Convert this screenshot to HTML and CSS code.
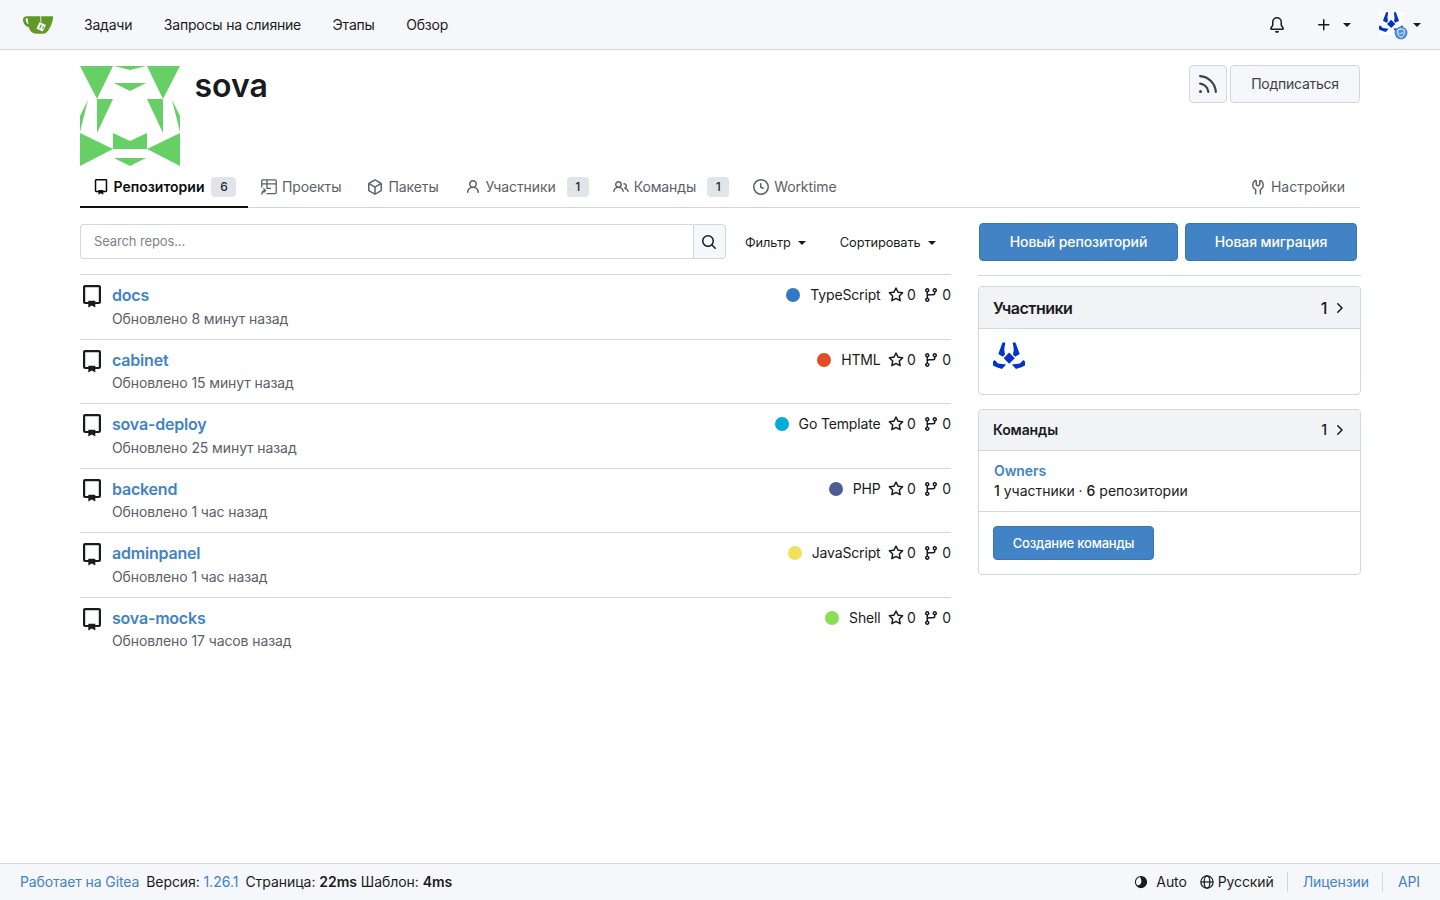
FILE: index.html
```html
<!DOCTYPE html>
<html lang="ru">
<head>
<meta charset="utf-8">
<title>sova</title>
<link rel="stylesheet" href="styles.css">
</head>
<body>
<svg class="sprite" aria-hidden="true">
  <symbol id="i-repo" viewBox="0 0 18 23"><path d="M12.500 18H15.900a1 1 0 0 0 1-1V2a.9.9 0 0 0-.9-.9H2a.9.9 0 0 0-.9.9V17a1 1 0 0 0 1 1H5.500" fill="none" stroke="currentColor" stroke-width="2.200" stroke-linecap="round"/><path d="M5.300 15.800h7v6.700l-3.500-2-3.500 2z" fill="currentColor"/></symbol>
  <symbol id="i-star" viewBox="0 0 16 16"><path d="M8 .25a.75.75 0 0 1 .673.418l1.882 3.815 4.21.612a.75.75 0 0 1 .416 1.279l-3.046 2.97.719 4.192a.751.751 0 0 1-1.088.791L8 12.347l-3.766 1.98a.75.75 0 0 1-1.088-.79l.72-4.194L.818 6.374a.75.75 0 0 1 .416-1.28l4.21-.611L7.327.668A.75.75 0 0 1 8 .25Zm0 2.445L6.615 5.5a.75.75 0 0 1-.564.41l-3.097.45 2.24 2.184a.75.75 0 0 1 .216.664l-.528 3.084 2.769-1.456a.75.75 0 0 1 .698 0l2.77 1.456-.53-3.084a.75.75 0 0 1 .216-.664l2.24-2.183-3.096-.45a.75.75 0 0 1-.564-.41L8 2.694Z"/></symbol>
  <symbol id="i-branch" viewBox="0 0 16 16"><path d="M9.5 3.25a2.25 2.25 0 1 1 3 2.122V6A2.5 2.5 0 0 1 10 8.5H6a1 1 0 0 0-1 1v1.128a2.251 2.251 0 1 1-1.5 0V5.372a2.25 2.25 0 1 1 1.5 0v1.836A2.493 2.493 0 0 1 6 7h4a1 1 0 0 0 1-1v-.628A2.25 2.25 0 0 1 9.5 3.25Zm-6 0a.75.75 0 1 0 1.5 0 .75.75 0 0 0-1.5 0Zm8.25-.75a.75.75 0 1 0 0 1.5.75.75 0 0 0 0-1.5ZM4.25 12a.75.75 0 1 0 0 1.5.75.75 0 0 0 0-1.5Z"/></symbol>
  <symbol id="i-bell" viewBox="0 0 16 16"><path d="M8 16a2 2 0 0 0 1.985-1.75c.017-.137-.097-.25-.235-.25h-3.5c-.138 0-.252.113-.235.25A2 2 0 0 0 8 16ZM3 5a5 5 0 0 1 10 0v2.947c0 .05.015.098.042.139l1.703 2.555A1.519 1.519 0 0 1 13.482 13H2.518a1.516 1.516 0 0 1-1.263-2.36l1.703-2.554A.255.255 0 0 0 3 7.947Zm5-3.5A3.5 3.5 0 0 0 4.5 5v2.947c0 .346-.102.683-.294.97l-1.703 2.556a.017.017 0 0 0-.003.01l.001.006c0 .002.002.004.004.006l.006.004.007.001h10.964l.007-.001.006-.004.004-.006.001-.007a.017.017 0 0 0-.003-.01l-1.703-2.554a1.745 1.745 0 0 1-.294-.97V5A3.5 3.5 0 0 0 8 1.5Z"/></symbol>
  <symbol id="i-plus" viewBox="0 0 16 16"><path d="M7.75 2a.75.75 0 0 1 .75.75V7h4.25a.75.75 0 0 1 0 1.5H8.5v4.25a.75.75 0 0 1-1.5 0V8.5H2.75a.75.75 0 0 1 0-1.5H7V2.75A.75.75 0 0 1 7.75 2Z"/></symbol>
  <symbol id="i-rss" viewBox="0 0 16 16"><path d="M2.002 2.725a.75.75 0 0 1 .797-.699C8.79 2.42 13.58 7.21 13.974 13.201a.75.75 0 0 1-1.497.098 10.502 10.502 0 0 0-9.776-9.776.747.747 0 0 1-.7-.798ZM2.84 7.05h-.002a7.002 7.002 0 0 1 6.113 6.111.75.75 0 0 1-1.49.178 5.503 5.503 0 0 0-4.8-4.8.75.75 0 0 1 .179-1.489ZM2 13a1 1 0 1 1 2 0 1 1 0 0 1-2 0Z"/></symbol>
  <symbol id="i-project" viewBox="0 0 16 16"><path d="M6 14.700H14a1.300 1.300 0 0 0 1.200-1.200V1.800A1.100 1.100 0 0 0 14 .8H2A1.100 1.100 0 0 0 .8 1.800V8M1 4.800h14M6 .8v8.600H9.500" fill="none" stroke="currentColor" stroke-width="1.300" stroke-linecap="round"/><path d="M.8 15.200c0-2.200 1.200-3.600 3.600-3.600M2.800 9.800l1.900 1.800-1.900 1.800" fill="none" stroke="currentColor" stroke-width="1.300" stroke-linecap="round" stroke-linejoin="round"/></symbol>
  <symbol id="i-package" viewBox="0 0 16 16"><path d="m8.878.392 5.25 3.045c.54.314.872.89.872 1.514v6.098a1.75 1.75 0 0 1-.872 1.514l-5.25 3.045a1.75 1.75 0 0 1-1.756 0l-5.25-3.045A1.75 1.75 0 0 1 1 11.049V4.951c0-.624.332-1.201.872-1.514L7.122.392a1.75 1.75 0 0 1 1.756 0ZM7.875 1.69l-4.63 2.685L8 7.133l4.755-2.758-4.63-2.685a.248.248 0 0 0-.25 0ZM2.5 5.677v5.372c0 .09.047.171.125.216l4.625 2.683V8.432Zm6.25 8.271 4.625-2.683a.25.25 0 0 0 .125-.216V5.677L8.75 8.432Z"/></symbol>
  <symbol id="i-person" viewBox="0 0 16 16"><path d="M10.561 8.073a6.005 6.005 0 0 1 3.432 5.142.75.75 0 1 1-1.498.07 4.5 4.5 0 0 0-8.99 0 .75.75 0 1 1-1.498-.07 6.004 6.004 0 0 1 3.431-5.142 3.999 3.999 0 1 1 5.123 0ZM10.5 5a2.5 2.5 0 1 0-5 0 2.5 2.5 0 0 0 5 0Z"/></symbol>
  <symbol id="i-people" viewBox="0 0 16 16"><path d="M2 5.5a3.5 3.5 0 1 1 5.898 2.549 5.508 5.508 0 0 1 3.034 4.084.75.75 0 1 1-1.482.235 4 4 0 0 0-7.9 0 .75.75 0 0 1-1.482-.236A5.507 5.507 0 0 1 3.102 8.05 3.493 3.493 0 0 1 2 5.5ZM11 4a3.001 3.001 0 0 1 2.22 5.018 5.01 5.01 0 0 1 2.56 3.012.749.749 0 0 1-.885.954.752.752 0 0 1-.549-.514 3.507 3.507 0 0 0-2.522-2.372.75.75 0 0 1-.574-.73v-.352a.75.75 0 0 1 .416-.672A1.5 1.5 0 0 0 11 5.5.75.75 0 0 1 11 4Zm-5.5-.5a2 2 0 1 0-.001 3.999A2 2 0 0 0 5.5 3.5Z"/></symbol>
  <symbol id="i-clock" viewBox="0 0 16 16"><path d="M8 0a8 8 0 1 1 0 16A8 8 0 0 1 8 0ZM1.5 8a6.5 6.5 0 1 0 13 0 6.5 6.5 0 0 0-13 0Zm7-3.25v2.992l2.028.812a.75.75 0 0 1-.557 1.392l-2.5-1A.751.751 0 0 1 7 8.25v-3.5a.75.75 0 0 1 1.5 0Z"/></symbol>
  <symbol id="i-tools" viewBox="0 0 16 16"><path d="M5.433 2.304A4.492 4.492 0 0 0 3.5 6c0 1.598.832 3.002 2.09 3.802.518.328.929.923.902 1.64v.008l-.164 3.337a.75.75 0 1 1-1.498-.073l.163-3.33c.002-.085-.05-.216-.207-.316A5.996 5.996 0 0 1 2 6a5.993 5.993 0 0 1 2.567-4.92 1.482 1.482 0 0 1 1.673-.04c.462.296.76.827.76 1.423v2.82c0 .082.041.16.11.206l.75.51a.25.25 0 0 0 .28 0l.75-.51A.249.249 0 0 0 9 5.282V2.463c0-.596.298-1.127.76-1.423a1.482 1.482 0 0 1 1.673.04A5.993 5.993 0 0 1 14 6a5.996 5.996 0 0 1-2.786 5.068c-.157.1-.209.23-.207.315l.163 3.33a.752.752 0 0 1-1.094.714.75.75 0 0 1-.404-.64l-.164-3.345c-.027-.717.384-1.312.902-1.64A4.495 4.495 0 0 0 12.5 6a4.492 4.492 0 0 0-1.933-3.696c-.024.017-.067.067-.067.16v2.818a1.75 1.75 0 0 1-.767 1.448l-.75.51a1.75 1.75 0 0 1-1.966 0l-.75-.51A1.75 1.75 0 0 1 5.5 5.282V2.463c0-.092-.043-.142-.067-.159Z"/></symbol>
  <symbol id="i-search" viewBox="0 0 16 16"><path d="M10.68 11.74a6 6 0 0 1-7.922-8.982 6 6 0 0 1 8.982 7.922l3.04 3.04a.749.749 0 0 1-.326 1.275.749.749 0 0 1-.734-.215ZM11.5 7a4.499 4.499 0 1 0-8.997 0A4.499 4.499 0 0 0 11.5 7Z"/></symbol>
  <symbol id="i-chevron" viewBox="0 0 16 16"><path d="M6.22 3.22a.75.75 0 0 1 1.06 0l4.25 4.25a.75.75 0 0 1 0 1.06l-4.25 4.25a.751.751 0 0 1-1.042-.018.751.751 0 0 1-.018-1.042L9.94 8 6.22 4.28a.75.75 0 0 1 0-1.06Z"/></symbol>
  <symbol id="i-caret" viewBox="0 0 8 4"><path d="M0 0h8L4 4z"/></symbol>
  <symbol id="i-globe" viewBox="0 0 16 16"><g fill="none" stroke="currentColor" stroke-width="1.400"><circle cx="8" cy="8" r="7"/><ellipse cx="8" cy="8" rx="3.200" ry="7"/><path d="M1 8h14"/></g></symbol>
  <symbol id="i-theme" viewBox="0 0 16 16"><circle cx="8" cy="8" r="6.400" fill="none" stroke="currentColor" stroke-width="1.200"/><path d="M6.500 1.800A6.400 6.400 0 1 1 2.800 12c3.200.2 6-1.400 5.600-5.200C8.200 5 7.600 3.200 6.500 1.800Z"/></symbol>
  <symbol id="i-user" viewBox="0 0 32 32"><path fill="#fff" d="M0 0h32v32H0z"/><g fill="#0433cc"><path d="M9.500 1.500h2.800L11.200 8.500l.8 5-2.200 2.300-4.500-2.800z"/><path d="M22.500 1.500h-2.800l1.100 7-.8 5 2.200 2.300 4.500-2.800z"/><path d="M16.200 11.600l5.600 5.600-5.600 5.600-5.600-5.600z"/><path d="M0 20.500l1.600-1.500 3.500 3.500 7.900 1-.9 1.200-3.100 3.300-6-2.100-3-1.300z"/><path d="M32 20.500l-1.600-1.500-3.500 3.500-7.900 1 .9 1.200 3.100 3.300 6-2.100 3-1.300z"/></g></symbol>
</svg>

<header class="navbar">
  <nav class="nav-left">
    <svg class="logo" viewBox="0 0 30 20" aria-label="Gitea">
      <path d="M0 4.500C0 2 2 1.200 4 1.200h26c.4 4-1.800 10-5 14.500-1.400 2-3 3-5 3h-6.500C9 18.700 7 16 5.800 12.300 2.500 11.400 0 8.500 0 4.500Z" fill="#609926"/>
      <path d="M2.600 4.300c0-.7.700-1.100 1.300-1.100l.8 0c.1 2 .3 4 .8 6C3.800 8.500 2.600 6.500 2.600 4.300Z" fill="#fff"/>
      <path d="M16.700 7l6.200 3.100-3.200 6.400-6.300-3.100z" fill="#fff"/>
      <path d="M17.800 9.500l1.100.5-1.700 3.600-1.100-.5zM20.200 10.900l1 .5-1.200 2.700-1-.5z" fill="#609926"/>
      <path d="M17 1.200l1.200 0 .3 5.800-1.100 0z" fill="#fff" opacity=".7"/>
    </svg>
    <a class="nav-link" href="#">Задачи</a>
    <a class="nav-link" href="#">Запросы на слияние</a>
    <a class="nav-link" href="#">Этапы</a>
    <a class="nav-link" href="#">Обзор</a>
  </nav>
  <div class="nav-right">
    <svg class="ic16 nav-bell"><use href="#i-bell"/></svg>
    <span class="nav-plus"><svg class="ic16"><use href="#i-plus"/></svg><svg class="caret"><use href="#i-caret"/></svg></span>
    <span class="nav-user">
      <span class="nav-avatar">
        <svg class="avatar-sm"><use href="#i-user"/></svg>
        <svg class="shield" viewBox="0 0 14 14"><circle cx="7" cy="7" r="6.500" fill="#4a90d9"/><path d="M7 2.800l3.300 1.200v2.700c0 2.100-1.400 3.700-3.300 4.500-1.900-.8-3.300-2.400-3.300-4.500V4z" fill="none" stroke="#fff" stroke-width="1"/><path d="M5.400 6.800l1.200 1.200 2-2" fill="none" stroke="#fff" stroke-width="1"/></svg>
      </span>
      <svg class="caret"><use href="#i-caret"/></svg>
    </span>
  </div>
</header>

<main class="page">
  <section class="org-head">
    <svg class="org-avatar" viewBox="0 0 100 100" aria-label="sova">
      <g fill="#66cf66">
        <path d="M0 0h33L17 33zM34 0h32L50 4zM67 0h33L83 33zM34 17h32L50 25zM17 33h16L17 67zM67 33h16v34zM8 34 0 50v16zM92 34l8 16v16z"/>
        <path d="M0 67l33 16L0 100zM100 67 67 83l33 17zM33 67l17 8 17-8v16H33zM34 92h32l-16 8z"/>
      </g>
    </svg>
    <h1 class="org-name">sova</h1>
    <div class="org-actions">
      <a class="btn-plain btn-rss" href="#"><svg class="ic24"><use href="#i-rss"/></svg></a>
      <a class="btn-plain btn-sub" href="#">Подписаться</a>
    </div>
  </section>

  <nav class="tabs">
    <a class="tab tab-active" href="#"><svg class="ic16"><use href="#i-repo"/></svg>Репозитории<span class="count count-wide">6</span></a>
    <a class="tab" href="#"><svg class="ic16"><use href="#i-project"/></svg>Проекты</a>
    <a class="tab" href="#"><svg class="ic16"><use href="#i-package"/></svg>Пакеты</a>
    <a class="tab tab-counted" href="#"><svg class="ic16"><use href="#i-person"/></svg>Участники<span class="count">1</span></a>
    <a class="tab tab-counted" href="#"><svg class="ic16"><use href="#i-people"/></svg>Команды<span class="count">1</span></a>
    <a class="tab" href="#"><svg class="ic16"><use href="#i-clock"/></svg>Worktime</a>
    <a class="tab tab-end" href="#"><svg class="ic16"><use href="#i-tools"/></svg>Настройки</a>
  </nav>

  <div class="columns">
    <section class="col-main">
      <div class="search-row">
        <div class="search-box">
          <input class="search-input" type="text" placeholder="Search repos...">
          <button class="search-btn" type="button"><svg class="ic16"><use href="#i-search"/></svg></button>
        </div>
        <span class="dropdown dd-filter">Фильтр<svg class="caret"><use href="#i-caret"/></svg></span>
        <span class="dropdown dd-sort">Сортировать<svg class="caret"><use href="#i-caret"/></svg></span>
      </div>
      <ul class="repos">
        <li class="repo">
          <svg class="repo-icon"><use href="#i-repo"/></svg>
          <div class="repo-body">
            <div class="repo-top"><a class="repo-name" href="#">docs</a>
              <div class="repo-meta"><i class="dot dot-ts"></i><span class="lang">TypeScript</span><svg class="ic16"><use href="#i-star"/></svg><span class="num">0</span><svg class="ic16 fork"><use href="#i-branch"/></svg><span class="num">0</span></div></div>
            <div class="repo-time">Обновлено 8 минут назад</div>
          </div>
        </li>
        <li class="repo">
          <svg class="repo-icon"><use href="#i-repo"/></svg>
          <div class="repo-body">
            <div class="repo-top"><a class="repo-name" href="#">cabinet</a>
              <div class="repo-meta"><i class="dot dot-html"></i><span class="lang">HTML</span><svg class="ic16"><use href="#i-star"/></svg><span class="num">0</span><svg class="ic16 fork"><use href="#i-branch"/></svg><span class="num">0</span></div></div>
            <div class="repo-time">Обновлено 15 минут назад</div>
          </div>
        </li>
        <li class="repo">
          <svg class="repo-icon"><use href="#i-repo"/></svg>
          <div class="repo-body">
            <div class="repo-top"><a class="repo-name" href="#">sova-deploy</a>
              <div class="repo-meta"><i class="dot dot-go"></i><span class="lang">Go Template</span><svg class="ic16"><use href="#i-star"/></svg><span class="num">0</span><svg class="ic16 fork"><use href="#i-branch"/></svg><span class="num">0</span></div></div>
            <div class="repo-time">Обновлено 25 минут назад</div>
          </div>
        </li>
        <li class="repo">
          <svg class="repo-icon"><use href="#i-repo"/></svg>
          <div class="repo-body">
            <div class="repo-top"><a class="repo-name" href="#">backend</a>
              <div class="repo-meta"><i class="dot dot-php"></i><span class="lang">PHP</span><svg class="ic16"><use href="#i-star"/></svg><span class="num">0</span><svg class="ic16 fork"><use href="#i-branch"/></svg><span class="num">0</span></div></div>
            <div class="repo-time">Обновлено 1 час назад</div>
          </div>
        </li>
        <li class="repo">
          <svg class="repo-icon"><use href="#i-repo"/></svg>
          <div class="repo-body">
            <div class="repo-top"><a class="repo-name" href="#">adminpanel</a>
              <div class="repo-meta"><i class="dot dot-js"></i><span class="lang">JavaScript</span><svg class="ic16"><use href="#i-star"/></svg><span class="num">0</span><svg class="ic16 fork"><use href="#i-branch"/></svg><span class="num">0</span></div></div>
            <div class="repo-time">Обновлено 1 час назад</div>
          </div>
        </li>
        <li class="repo">
          <svg class="repo-icon"><use href="#i-repo"/></svg>
          <div class="repo-body">
            <div class="repo-top"><a class="repo-name" href="#">sova-mocks</a>
              <div class="repo-meta"><i class="dot dot-sh"></i><span class="lang">Shell</span><svg class="ic16"><use href="#i-star"/></svg><span class="num">0</span><svg class="ic16 fork"><use href="#i-branch"/></svg><span class="num">0</span></div></div>
            <div class="repo-time">Обновлено 17 часов назад</div>
          </div>
        </li>
      </ul>
    </section>

    <aside class="col-side">
      <div class="side-actions">
        <a class="btn-primary btn-new-repo" href="#">Новый репозиторий</a>
        <a class="btn-primary btn-new-mig" href="#">Новая миграция</a>
      </div>
      <hr class="side-rule">
      <div class="card">
        <div class="card-head card-head-lg"><span>Участники</span><span class="card-count">1<svg class="ic16"><use href="#i-chevron"/></svg></span></div>
        <div class="card-members"><svg class="avatar-md"><use href="#i-user"/></svg></div>
      </div>
      <div class="card card-teams">
        <div class="card-head"><span>Команды</span><span class="card-count">1<svg class="ic16"><use href="#i-chevron"/></svg></span></div>
        <div class="team">
          <a class="team-name" href="#">Owners</a>
          <div class="team-info"><b class="team-b">1</b> участники · <b class="team-b">6</b> репозитории</div>
        </div>
        <div class="card-foot"><a class="btn-primary btn-team" href="#">Создание команды</a></div>
      </div>
    </aside>
  </div>
</main>

<footer class="footer">
  <div class="foot-left">
    <a class="link" href="#">Работает на Gitea</a>
    <span>Версия: <a class="link foot-ver" href="#">1.26.1</a></span>
    <span class="foot-perf">Страница: <b class="foot-b">22ms</b> Шаблон: <b class="foot-b">4ms</b></span>
  </div>
  <div class="foot-right">
    <span class="foot-item foot-theme"><svg class="ic14"><use href="#i-theme"/></svg>Auto</span>
    <span class="foot-item foot-lang"><svg class="ic14"><use href="#i-globe"/></svg>Русский</span>
    <a class="link foot-sep" href="#">Лицензии</a>
    <a class="link foot-sep" href="#">API</a>
  </div>
</footer>
</body>
</html>
```

FILE: styles.css
```css
* { box-sizing: border-box; }
html, body { margin: 0; height: 100%; }
body {
  min-height: 100vh;
  display: flex;
  flex-direction: column;
  background: #fff;
  color: #181c21;
  font: 14px/20px Inter, "Noto Sans", "Liberation Sans", sans-serif;
  letter-spacing: -0.1px;
}
a { text-decoration: none; color: inherit; }
svg { fill: currentColor; flex: none; }
.sprite { display: none; }
.ic14 { width: 14px; height: 14px; }
.ic16 { width: 16px; height: 16px; }
.ic24 { width: 24px; height: 24px; }
.caret { width: 8px; height: 4px; }
.link { color: #4183c4; }

/* navbar */
.navbar {
  height: 50px;
  flex: none;
  display: flex;
  align-items: center;
  justify-content: space-between;
  padding: 0 19px 0 23px;
  background: #f6f7fa;
  border-bottom: 1px solid #d0d7de;
}
.nav-left { display: flex; align-items: center; }
.logo { width: 30px; height: 20px; margin-right: 31px; }
.nav-link { margin-right: 31.5px; color: #181c21; letter-spacing: -0.2px; }
.nav-right { display: flex; align-items: center; color: #181c21; }
.nav-bell { margin-right: 31px; }
.nav-plus { display: flex; align-items: center; gap: 11px; margin-right: 28px; }
.nav-user { display: flex; align-items: center; gap: 6px; }
.nav-avatar { position: relative; width: 28px; height: 28px; }
.avatar-sm { width: 24px; height: 24px; display: block; }
.shield { position: absolute; left: 15px; top: 15px; width: 14px; height: 14px; }

/* page */
.page {
  width: 1280px;
  margin: 0 auto;
  flex: 1 0 auto;
}
.org-head {
  display: flex;
  align-items: flex-start;
  padding-top: 16px;
  height: 120px;
}
.org-avatar { width: 100px; height: 100px; display: block; }
.org-name {
  margin: 0 0 0 14.5px;
  font-size: 32px;
  line-height: 40px;
  font-weight: 600;
  letter-spacing: 0;
}
.org-actions { margin-left: auto; display: flex; gap: 3px; margin-top: -1px; }
.btn-plain {
  height: 38px;
  display: flex;
  align-items: center;
  justify-content: center;
  background: #f6f7fa;
  border: 1px solid #d0d7de;
  border-radius: 4px;
  color: #3c4148;
  letter-spacing: -0.25px;
}
.btn-rss { width: 38px; }
.btn-sub { width: 130px; }

/* tabs */
.tabs {
  display: flex;
  height: 38px;
  border-bottom: 1px solid #d0d7de;
  color: #5b6167;
}
.tab {
  display: flex;
  align-items: center;
  gap: 5px;
  height: 38px;
  padding: 0 13.5px 4px 12.5px;
}
.tab-counted { padding-right: 11.5px; }
.tab-active {
  color: #0a0d10;
  font-weight: 600;
  letter-spacing: 0;
  border-bottom: 2px solid #111;
  padding: 0 12px 2px 12.5px;
}
.tab-end { margin-left: auto; padding-right: 15px; letter-spacing: 0; }
.count {
  min-width: 22px;
  height: 20px;
  margin-left: 6px;
  padding: 0 7px;
  display: flex;
  align-items: center;
  justify-content: center;
  background: #e1e4e8;
  color: #22272c;
  border-radius: 4px;
  font-size: 12px;
  font-weight: 500;
}
.count-wide { min-width: 25px; margin-left: 2px; }

/* columns */
.columns { display: flex; padding-top: 15px; }
.col-main { width: 871px; }
.col-side { width: 383px; margin-left: 27px; margin-right: -1px; }

.search-row { display: flex; align-items: flex-end; height: 36px; }
.search-box { width: 646px; height: 35px; display: flex; }
.search-input {
  flex: 1;
  min-width: 0;
  padding: 0 13px 1px;
  border: 1px solid #d0d7de;
  border-right: 0;
  border-radius: 4px 0 0 4px;
  font: 13px Inter, "Liberation Sans", sans-serif;
  letter-spacing: -0.12px;
  outline: none;
  color: #181c21;
}
.search-input::placeholder { color: #7d848c; }
.search-btn {
  width: 33px;
  padding: 0 1px 0 0;
  display: flex;
  align-items: center;
  justify-content: center;
  background: #f6f7fa;
  border: 1px solid #d0d7de;
  border-radius: 0 4px 4px 0;
  color: #181c21;
}
.dropdown { display: flex; align-items: center; height: 35px; padding-top: 2px; font-size: 12.8px; gap: 7px; }
.dd-filter { margin-left: 19px; }
.dd-sort { margin-left: 34px; }

.repos { list-style: none; margin: 15px 0 0; padding: 0; }
.repo {
  display: flex;
  height: 64.5px;
  border-top: 1px solid #d0d7de;
  padding-top: 10px;
}
.repo-icon { width: 18px; height: 23px; margin-left: 3px; color: #181c21; }
.repo-body { flex: 1; margin-left: 11px; min-width: 0; }
.repo-top { display: flex; justify-content: space-between; align-items: center; height: 20px; }
.repo-name { color: #4183c4; font-size: 16px; font-weight: 600; letter-spacing: -0.2px; }
.repo-meta { display: flex; align-items: center; }
.dot { width: 14px; height: 14px; border-radius: 50%; margin-right: 10px; }
.dot-ts { background: #3178c6; }
.dot-html { background: #e34c26; }
.dot-go { background: #00add8; }
.dot-php { background: #4f5d95; }
.dot-js { background: #f1e05a; }
.dot-sh { background: #89e051; }
.lang { margin-right: 7px; letter-spacing: -0.15px; }
.num { margin-left: 3.5px; }
.fork { margin-left: 7px; }
.repo-time { margin-top: 3.75px; color: #5b6167; }

/* side */
.side-actions { display: flex; gap: 7px; padding-left: 1px; }
.btn-primary {
  display: flex;
  align-items: center;
  justify-content: center;
  background: #4183c4;
  border: 1px solid #3a75b0;
  border-radius: 4px;
  color: #fff;
  font-weight: 500;
}
.btn-new-repo { width: 199px; height: 38px; }
.btn-new-mig { width: 172px; height: 38px; }
.side-rule { margin: 14px 0 10px; border: 0; border-top: 1px solid #d0d7de; }
.card { border: 1px solid #d0d7de; border-radius: 4px; overflow: hidden; }
.card-head {
  height: 41px;
  display: flex;
  align-items: center;
  justify-content: space-between;
  padding: 0 13px 0 14px;
  background: #f1f3f5;
  border-bottom: 1px solid #d0d7de;
  font-weight: 600;
}
.card-head-lg { height: 42px; font-size: 16px; letter-spacing: -0.5px; }
.card-count { display: flex; align-items: center; gap: 4px; font-weight: 500; }
.card-members { height: 65px; padding: 12px 14px; }
.avatar-md { width: 32px; height: 32px; display: block; }
.card-teams { margin-top: 14px; }
.team { height: 61px; padding: 10px 15px; border-bottom: 1px solid #d0d7de; }
.team-name { display: block; color: #4183c4; font-weight: 600; }
.team-info { letter-spacing: 0; }
.team-b { font-weight: 500; }
.card-foot { height: 62px; padding: 14px; }
.btn-team { width: 161px; height: 34px; font-size: 13px; letter-spacing: -0.2px; }

/* footer */
.footer {
  flex: none;
  height: 37px;
  display: flex;
  align-items: center;
  justify-content: space-between;
  padding: 0 20px;
  background: #f6f7fa;
  border-top: 1px solid #d0d7de;
}
.foot-left { display: flex; gap: 7px; }
.foot-ver { letter-spacing: 0; }
.foot-perf { letter-spacing: -0.04px; }
.foot-b { font-weight: 600; }
.foot-right { display: flex; align-items: center; }
.foot-item { display: flex; align-items: center; }
.foot-theme { gap: 8px; margin-right: 13px; }
.foot-lang { gap: 4px; margin-right: 13px; }
.foot-sep { border-left: 1px solid #d0d7de; padding-left: 15px; margin-right: 13px; }
.foot-sep:last-child { margin-right: 0; }
```
